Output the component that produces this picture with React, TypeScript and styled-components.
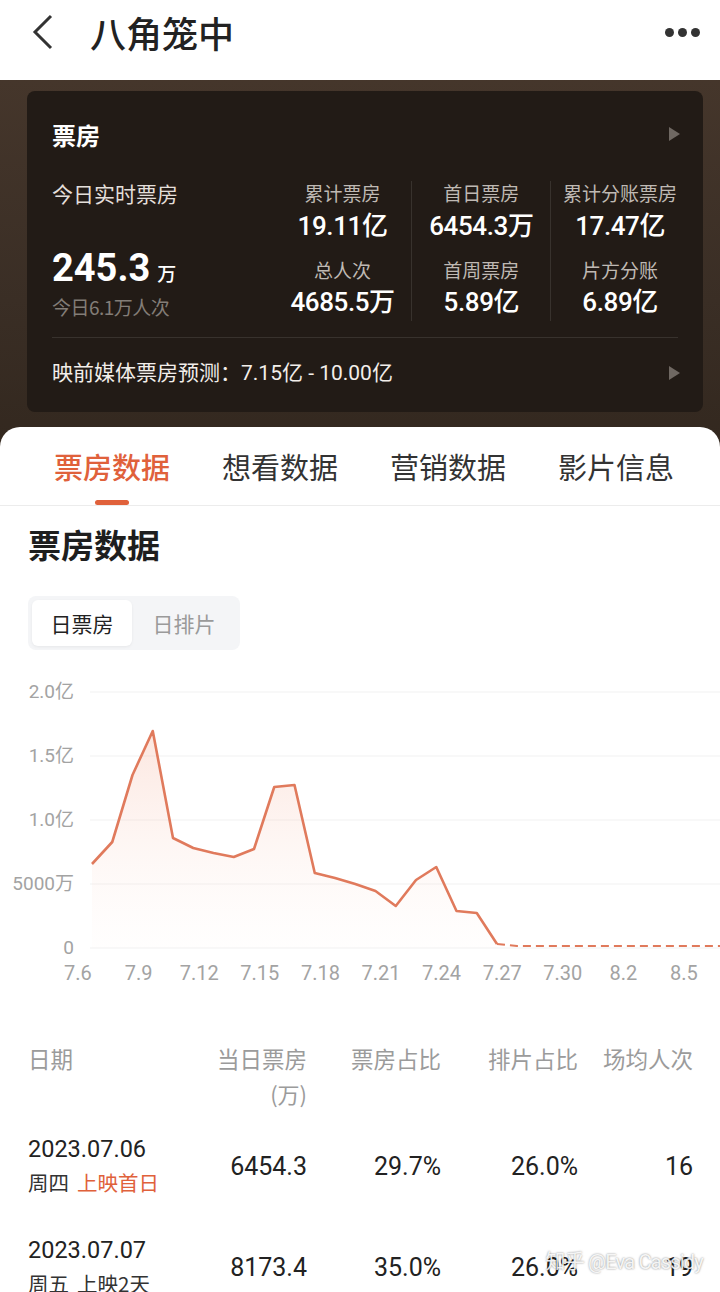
import styled, { createGlobalStyle } from "styled-components";

const GlobalStyle = createGlobalStyle`
  body {
    margin: 0;
    background: #ffffff;
    font-family: Roboto, "Noto Sans CJK SC", sans-serif;
  }
`;

const CJK = `"Noto Sans CJK SC", sans-serif`;
const NUM = `Roboto, "Noto Sans CJK SC", sans-serif`;
const ORANGE = "#e0613b";

const topStats = [
  { label: "累计票房", value: "19.11亿", label2: "总人次", value2: "4685.5万" },
  { label: "首日票房", value: "6454.3万", label2: "首周票房", value2: "5.89亿" },
  { label: "累计分账票房", value: "17.47亿", label2: "片方分账", value2: "6.89亿" },
];

const tabs = ["票房数据", "想看数据", "营销数据", "影片信息"];

// page y coordinates of each day from 7.6 to 7.26
const points = [
  866, 844, 777, 733, 840, 850, 855, 859, 851, 789, 787, 875, 880, 886, 893,
  908, 882, 869, 913, 915, 946,
];
const yTicks = [
  { y: 694, label: "2.0亿" },
  { y: 758, label: "1.5亿" },
  { y: 822, label: "1.0亿" },
  { y: 886, label: "5000万" },
  { y: 950, label: "0" },
];
const xTicks = ["7.6", "7.9", "7.12", "7.15", "7.18", "7.21", "7.24", "7.27", "7.30", "8.2", "8.5"];

const rows = [
  { date: "2023.07.06", week: "周四", note: "上映首日", hot: true, box: "6454.3", share: "29.7%", sched: "26.0%", avg: "16" },
  { date: "2023.07.07", week: "周五", note: "上映2天", hot: false, box: "8173.4", share: "35.0%", sched: "26.0%", avg: "19" },
];

const Page = styled.div`
  width: 720px;
  height: 1292px;
  overflow: hidden;
  position: relative;
  background: #fff;
`;

const Header = styled.header`
  height: 80px;
  box-sizing: border-box;
  display: flex;
  align-items: center;
  padding: 0 20px 16px 32px;
  background: #fff;
`;

const Title = styled.h1`
  margin: 0 0 0 36px;
  font-family: ${CJK};
  font-size: 36px;
  line-height: 48px;
  font-weight: 500;
  color: #222;
  flex: 1;
`;

const Dots = styled.div`
  display: flex;
  gap: 4px;
  span {
    width: 9px;
    height: 9px;
    border-radius: 50%;
    background: #333;
  }
`;

const DarkBand = styled.section`
  background: linear-gradient(180deg, #45362b 0%, #3a2e25 60%, #33281f 100%);
  padding: 11px 17px 35px 27px;
`;

const Card = styled.div`
  background: #221b16;
  border-radius: 8px;
  padding: 0 14px 27px 25px;
  color: #fff;
`;

const CardHead = styled.div`
  display: flex;
  align-items: center;
  justify-content: space-between;
  padding: 30px 9px 0 0;
  height: 26px;
  box-sizing: content-box;
  font-family: ${CJK};
  font-size: 24px;
  font-weight: 700;
`;

const Tri = styled.span`
  width: 0;
  height: 0;
  border-top: 7px solid transparent;
  border-bottom: 7px solid transparent;
  border-left: 11px solid #6f6862;
`;

const StatsRow = styled.div`
  display: flex;
  margin-top: 34px;
`;

const TodayCol = styled.div`
  width: 222px;
  display: flex;
  flex-direction: column;
`;

const Muted = styled.div<{ $dim?: boolean }>`
  font-family: ${CJK};
  font-size: ${(p) => (p.$dim ? "19px" : "21px")};
  line-height: 24px;
  color: ${(p) => (p.$dim ? "#837d77" : "#e4dfda")};
  letter-spacing: ${(p) => (p.$dim ? "-0.5px" : "0")};
`;

const BigNum = styled.div`
  margin-top: 41px;
  font-family: ${NUM};
  font-size: 38px;
  font-weight: 700;
  line-height: 44px;
  span {
    font-family: ${CJK};
    font-size: 19px;
    font-weight: 500;
    margin-left: 7px;
  }
`;

const StatCol = styled.div<{ $first?: boolean }>`
  width: 138px;
  display: flex;
  flex-direction: column;
  align-items: center;
  border-left: ${(p) => (p.$first ? "none" : "1px solid rgba(255,255,255,0.1)")};
  padding-bottom: 4px;
`;

const StatLabel = styled.div<{ $gap?: number }>`
  font-family: ${CJK};
  font-size: 19px;
  line-height: 24px;
  color: #bfb9b3;
  margin-top: ${(p) => p.$gap ?? 0}px;
`;

const StatValue = styled.div<{ $gap: number }>`
  font-family: ${NUM};
  font-size: 26px;
  font-weight: 500;
  line-height: 30px;
  margin-top: ${(p) => p.$gap}px;
  letter-spacing: -0.4px;
`;

const Divider = styled.div`
  height: 1px;
  background: rgba(255, 255, 255, 0.1);
  margin: 16px 11px 0 0;
`;

const Forecast = styled.div`
  display: flex;
  align-items: center;
  justify-content: space-between;
  padding: 23px 9px 0 0;
  font-family: ${NUM};
  font-size: 21px;
  line-height: 24px;
  color: #f2eeea;
`;

const Sheet = styled.section`
  margin-top: -20px;
  background: #fff;
  border-radius: 20px 20px 0 0;
  position: relative;
`;

const TabBar = styled.nav`
  display: flex;
  gap: 52px;
  padding: 0 0 0 54px;
  height: 78px;
  border-bottom: 1px solid #ececec;
`;

const Tab = styled.div<{ $active?: boolean }>`
  position: relative;
  font-family: ${CJK};
  font-size: 29px;
  line-height: 78px;
  color: ${(p) => (p.$active ? ORANGE : "#333")};
  font-weight: ${(p) => (p.$active ? 500 : 400)};
  &::after {
    content: "";
    display: ${(p) => (p.$active ? "block" : "none")};
    position: absolute;
    left: 50%;
    bottom: 0;
    transform: translateX(-50%);
    width: 34px;
    height: 5px;
    border-radius: 3px;
    background: ${ORANGE};
  }
`;

const SectionTitle = styled.h2`
  margin: 16px 0 0 28px;
  font-family: ${CJK};
  font-size: 33px;
  font-weight: 700;
  line-height: 44px;
  color: #1e1e1e;
`;

const Segmented = styled.div`
  display: inline-flex;
  margin: 30px 0 0 28px;
  padding: 4px;
  background: #f4f5f7;
  border-radius: 8px;
`;

const Seg = styled.div<{ $active?: boolean }>`
  width: ${(p) => (p.$active ? "100px" : "104px")};
  height: 46px;
  display: flex;
  align-items: center;
  justify-content: center;
  font-family: ${CJK};
  font-size: 21px;
  color: ${(p) => (p.$active ? "#222" : "#9a9a9a")};
  background: ${(p) => (p.$active ? "#fff" : "transparent")};
  border-radius: 6px;
  box-shadow: ${(p) => (p.$active ? "0 1px 3px rgba(0,0,0,0.06)" : "none")};
`;

const Chart = styled.svg`
  display: block;
  margin-top: 28px;
  font-family: ${NUM};
`;

const Table = styled.div`
  padding: 56px 27px 0 28px;
`;

const Row = styled.div<{ $head?: boolean }>`
  display: grid;
  grid-template-columns: 172px 107px 134px 137px 115px;
  align-items: ${(p) => (p.$head ? "start" : "center")};
  padding: ${(p) => (p.$head ? "0 0 8px" : "18px 0 17px")};
`;

const HeadCell = styled.div<{ $left?: boolean }>`
  font-family: ${CJK};
  font-size: 22.5px;
  line-height: 28px;
  color: #9b9b9b;
  white-space: nowrap;
  text-align: ${(p) => (p.$left ? "left" : "right")};
  small {
    display: block;
    font-size: 22px;
    margin-top: 7px;
  }
`;

const DateCell = styled.div`
  font-family: ${NUM};
  font-size: 23.5px;
  line-height: 32px;
  color: #222;
  div {
    font-family: ${CJK};
    font-size: 20.5px;
    line-height: 34px;
    color: #333;
  }
`;

const Note = styled.span<{ $hot?: boolean }>`
  margin-left: 8px;
  color: ${(p) => (p.$hot ? ORANGE : "#333")};
`;

const Val = styled.div`
  font-family: ${NUM};
  font-size: 25px;
  color: #222;
  text-align: right;
`;

const Watermark = styled.div`
  position: absolute;
  right: 17px;
  top: 1246px;
  font-family: ${NUM};
  font-size: 20px;
  color: rgba(255, 255, 255, 0.9);
  text-shadow: 0 0 2px rgba(0, 0, 0, 0.5);
  letter-spacing: -0.8px;
  white-space: nowrap;
`;

function BoxChart() {
  const top = 680;
  const pts = points.map((y, i) => [92 + i * 20.25, y - top]);
  const line = pts.map((p) => p.join(",")).join(" ");
  const last = pts[pts.length - 1];
  const area = `M${pts.map((p) => p.join(",")).join(" L")} L${last[0]},${950 - top} L92,${950 - top} Z`;
  return (
    <Chart width={720} height={310} viewBox="0 0 720 310">
      <defs>
        <linearGradient id="fill" x1="0" y1="0" x2="0" y2="1">
          <stop offset="0" stopColor="#f4a68c" stopOpacity="0.28" />
          <stop offset="1" stopColor="#fde8e0" stopOpacity="0.05" />
        </linearGradient>
      </defs>
      {yTicks.map((t) => (
        <g key={t.label}>
          <line x1={90} x2={720} y1={t.y - top} y2={t.y - top} stroke="#f1f1f1" strokeWidth={1} />
          <text x={74} y={t.y - top + 6} textAnchor="end" fontSize={19} fill="#a3a3a3">
            {t.label}
          </text>
        </g>
      ))}
      <path d={area} fill="url(#fill)" />
      <polyline points={line} fill="none" stroke="#e07a5c" strokeWidth={2.6} strokeLinejoin="round" />
      <polyline
        points={`${last[0]},${last[1]} 517,${948 - top} 720,${948 - top}`}
        fill="none"
        stroke="#e07a5c"
        strokeWidth={2}
        strokeDasharray="8 5"
      />
      {xTicks.map((t, i) => (
        <text key={t} x={78 + i * 60.6} y={982 - top} textAnchor="middle" fontSize={20} fill="#a3a3a3">
          {t}
        </text>
      ))}
    </Chart>
  );
}

export default function App() {
  return (
    <Page>
      <GlobalStyle />
      <Header>
        <svg width="22" height="36" viewBox="0 0 22 36">
          <path d="M19 2 L3 18 L19 34" fill="none" stroke="#333" strokeWidth="3" />
        </svg>
        <Title>八角笼中</Title>
        <Dots>
          <span />
          <span />
          <span />
        </Dots>
      </Header>

      <DarkBand>
        <Card>
          <CardHead>
            票房
            <Tri />
          </CardHead>
          <StatsRow>
            <TodayCol>
              <Muted>今日实时票房</Muted>
              <BigNum>
                245.3<span>万</span>
              </BigNum>
              <Muted $dim>今日6.1万人次</Muted>
            </TodayCol>
            {topStats.map((s, i) => (
              <StatCol key={s.label} $first={i === 0}>
                <StatLabel>{s.label}</StatLabel>
                <StatValue $gap={6}>{s.value}</StatValue>
                <StatLabel $gap={17}>{s.label2}</StatLabel>
                <StatValue $gap={5}>{s.value2}</StatValue>
              </StatCol>
            ))}
          </StatsRow>
          <Divider />
          <Forecast>
            <span>映前媒体票房预测：7.15亿 - 10.00亿</span>
            <Tri />
          </Forecast>
        </Card>
      </DarkBand>

      <Sheet>
        <TabBar>
          {tabs.map((t, i) => (
            <Tab key={t} $active={i === 0}>
              {t}
            </Tab>
          ))}
        </TabBar>
        <SectionTitle>票房数据</SectionTitle>
        <Segmented>
          <Seg $active>日票房</Seg>
          <Seg>日排片</Seg>
        </Segmented>
        <BoxChart />
        <Table>
          <Row $head>
            <HeadCell $left>日期</HeadCell>
            <HeadCell>
              当日票房<small>(万)</small>
            </HeadCell>
            <HeadCell>票房占比</HeadCell>
            <HeadCell>排片占比</HeadCell>
            <HeadCell>场均人次</HeadCell>
          </Row>
          {rows.map((r) => (
            <Row key={r.date}>
              <DateCell>
                {r.date}
                <div>
                  {r.week}
                  <Note $hot={r.hot}>{r.note}</Note>
                </div>
              </DateCell>
              <Val>{r.box}</Val>
              <Val>{r.share}</Val>
              <Val>{r.sched}</Val>
              <Val>{r.avg}</Val>
            </Row>
          ))}
        </Table>
      </Sheet>
      <Watermark>知乎 @Eva Cassidy</Watermark>
    </Page>
  );
}
